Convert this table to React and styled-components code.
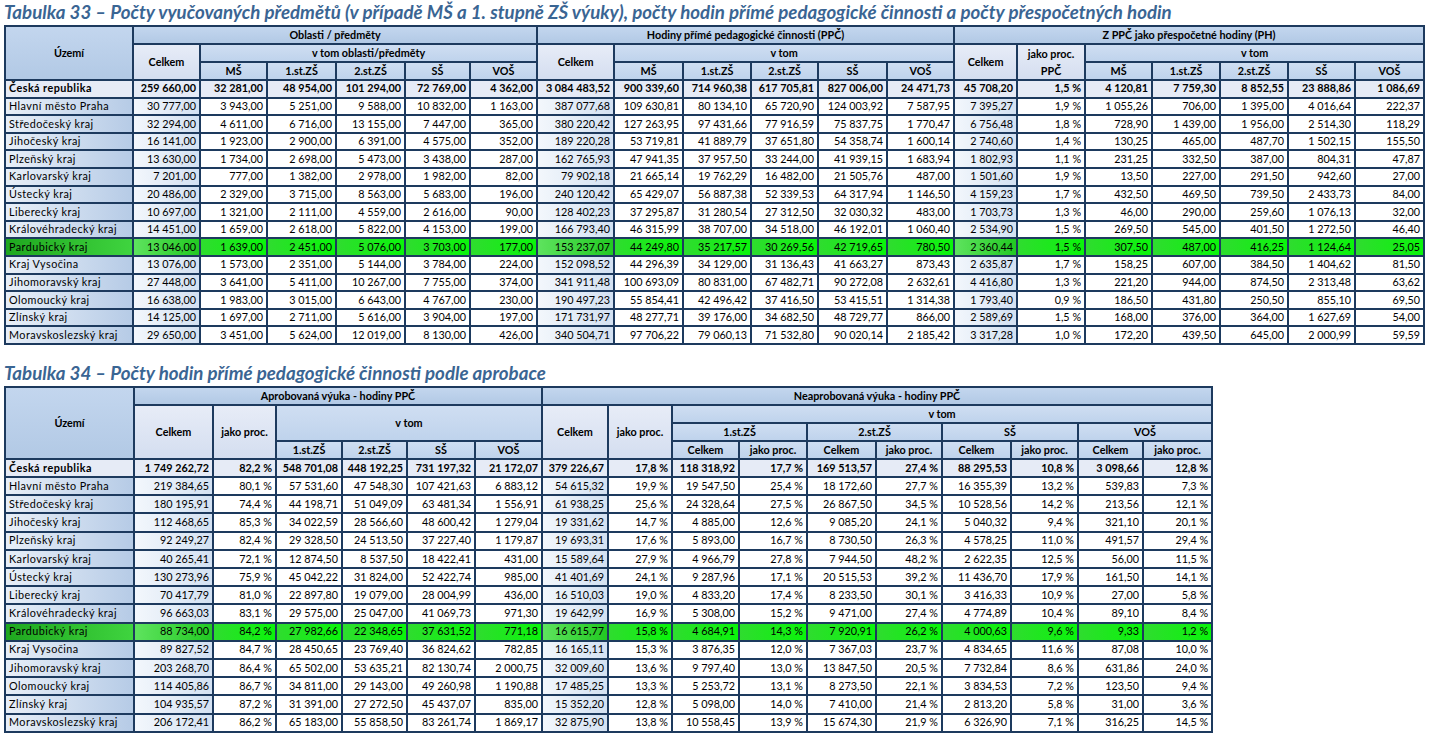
import React from "react";
import styled, { createGlobalStyle, css } from "styled-components";

const Global = createGlobalStyle`
  html, body { margin: 0; padding: 0; background: #ffffff; }
  body { font-family: Lato, "Noto Sans", sans-serif; color: #000; }
`;

const Page = styled.div`
  display: flex;
  flex-direction: column;
  padding: 2px 4px 0 4px;
`;

const Section = styled.section`
  display: flex;
  flex-direction: column;
  margin-bottom: ${(p) => p.$gap || 0}px;
`;

const Title = styled.h2`
  margin: 0 0 ${(p) => p.$below || 4}px 0;
  font-family: Lato, "Noto Sans", sans-serif;
  font-style: italic;
  font-weight: 700;
  font-size: 18.7px;
  line-height: 21px;
  color: #3a6593;
  white-space: nowrap;
`;

const Table = styled.table`
  border-collapse: collapse;
  table-layout: fixed;
  width: ${(p) => p.$width}px;
  border: 2px solid #1d3a5e;
  font-size: 10.8px;
  line-height: 1;
`;

const BORDER = "#1d3a5e";

const headBg = {
  dark: "linear-gradient(to bottom, #c3d6ee, #b2c9e5)",
  mid: "linear-gradient(to bottom, #cfdef2, #bfd3ec)",
  light: "linear-gradient(to bottom, #e7ecf7, #d4def0)",
};

const Th = styled.th`
  border: 2px solid ${BORDER};
  background: ${(p) => headBg[p.$tone || "mid"]};
  font-weight: 700;
  text-align: center;
  vertical-align: middle;
  height: ${(p) => p.$h}px;
  padding: 0 2px;
  white-space: ${(p) => (p.$wrap ? "normal" : "nowrap")};
  line-height: ${(p) => (p.$wrap ? "17px" : "1")};
  overflow: hidden;
  color: #000;
`;

const cellBg = ({ $kind, $green, $total }) => {
  if ($green) {
    if ($kind === "name") return "linear-gradient(to right, #1fa71f, #3fd43f)";
    if ($kind === "celkem") return "linear-gradient(to right, #5ee35e, #22c922)";
    return "linear-gradient(to right, #2fdc2f, #0af50a)";
  }
  if ($total) return "#e6ebf6";
  if ($kind === "name") return "linear-gradient(to right, #e8eff8, #b6cbe6)";
  if ($kind === "celkem") return "linear-gradient(to right, #f3f7fc, #d3e1f2)";
  return "#ffffff";
};

const Td = styled.td`
  border: 2px solid ${BORDER};
  height: ${(p) => p.$h}px;
  padding: 0 3px 0 3px;
  white-space: nowrap;
  overflow: hidden;
  text-align: ${(p) => (p.$kind === "name" ? "left" : "right")};
  font-weight: ${(p) => (p.$total ? 700 : 400)};
  background: ${cellBg};
  ${(p) =>
    p.$kind === "name" &&
    css`
      letter-spacing: 0.45px;
    `}
`;

const t33Cols = [128, 67, 67, 69, 69, 65, 67, 77, 69, 68, 67, 69, 67, 63, 68, 67, 68, 68, 67, 69];
const t34Cols = [129, 79, 63, 66, 65, 68, 67, 66, 64, 67, 68, 69, 66, 69, 67, 65, 69];

const t33Celkem = new Set([1, 7, 13]);
const t34Celkem = new Set([1, 7]);

const t33Rows = [
  ["Česká republika", "259 660,00", "32 281,00", "48 954,00", "101 294,00", "72 769,00", "4 362,00", "3 084 483,52", "900 339,60", "714 960,38", "617 705,81", "827 006,00", "24 471,73", "45 708,20", "1,5 %", "4 120,81", "7 759,30", "8 852,55", "23 888,86", "1 086,69"],
  ["Hlavní město Praha", "30 777,00", "3 943,00", "5 251,00", "9 588,00", "10 832,00", "1 163,00", "387 077,68", "109 630,81", "80 134,10", "65 720,90", "124 003,92", "7 587,95", "7 395,27", "1,9 %", "1 055,26", "706,00", "1 395,00", "4 016,64", "222,37"],
  ["Středočeský kraj", "32 294,00", "4 611,00", "6 716,00", "13 155,00", "7 447,00", "365,00", "380 220,42", "127 263,95", "97 431,66", "77 916,59", "75 837,75", "1 770,47", "6 756,48", "1,8 %", "728,90", "1 439,00", "1 956,00", "2 514,30", "118,29"],
  ["Jihočeský kraj", "16 141,00", "1 923,00", "2 900,00", "6 391,00", "4 575,00", "352,00", "189 220,28", "53 719,81", "41 889,79", "37 651,80", "54 358,74", "1 600,14", "2 740,60", "1,4 %", "130,25", "465,00", "487,70", "1 502,15", "155,50"],
  ["Plzeňský kraj", "13 630,00", "1 734,00", "2 698,00", "5 473,00", "3 438,00", "287,00", "162 765,93", "47 941,35", "37 957,50", "33 244,00", "41 939,15", "1 683,94", "1 802,93", "1,1 %", "231,25", "332,50", "387,00", "804,31", "47,87"],
  ["Karlovarský kraj", "7 201,00", "777,00", "1 382,00", "2 978,00", "1 982,00", "82,00", "79 902,18", "21 665,14", "19 762,29", "16 482,00", "21 505,76", "487,00", "1 501,60", "1,9 %", "13,50", "227,00", "291,50", "942,60", "27,00"],
  ["Ústecký kraj", "20 486,00", "2 329,00", "3 715,00", "8 563,00", "5 683,00", "196,00", "240 120,42", "65 429,07", "56 887,38", "52 339,53", "64 317,94", "1 146,50", "4 159,23", "1,7 %", "432,50", "469,50", "739,50", "2 433,73", "84,00"],
  ["Liberecký kraj", "10 697,00", "1 321,00", "2 111,00", "4 559,00", "2 616,00", "90,00", "128 402,23", "37 295,87", "31 280,54", "27 312,50", "32 030,32", "483,00", "1 703,73", "1,3 %", "46,00", "290,00", "259,60", "1 076,13", "32,00"],
  ["Královéhradecký kraj", "14 451,00", "1 659,00", "2 618,00", "5 822,00", "4 153,00", "199,00", "166 793,40", "46 315,99", "38 707,00", "34 518,00", "46 192,01", "1 060,40", "2 534,90", "1,5 %", "269,50", "545,00", "401,50", "1 272,50", "46,40"],
  ["Pardubický kraj", "13 046,00", "1 639,00", "2 451,00", "5 076,00", "3 703,00", "177,00", "153 237,07", "44 249,80", "35 217,57", "30 269,56", "42 719,65", "780,50", "2 360,44", "1,5 %", "307,50", "487,00", "416,25", "1 124,64", "25,05"],
  ["Kraj Vysočina", "13 076,00", "1 573,00", "2 351,00", "5 144,00", "3 784,00", "224,00", "152 098,52", "44 296,39", "34 129,00", "31 136,43", "41 663,27", "873,43", "2 635,87", "1,7 %", "158,25", "607,00", "384,50", "1 404,62", "81,50"],
  ["Jihomoravský kraj", "27 448,00", "3 641,00", "5 411,00", "10 267,00", "7 755,00", "374,00", "341 911,48", "100 693,09", "80 831,00", "67 482,71", "90 272,08", "2 632,61", "4 416,80", "1,3 %", "221,20", "944,00", "874,50", "2 313,48", "63,62"],
  ["Olomoucký kraj", "16 638,00", "1 983,00", "3 015,00", "6 643,00", "4 767,00", "230,00", "190 497,23", "55 854,41", "42 496,42", "37 416,50", "53 415,51", "1 314,38", "1 793,40", "0,9 %", "186,50", "431,80", "250,50", "855,10", "69,50"],
  ["Zlínský kraj", "14 125,00", "1 697,00", "2 711,00", "5 616,00", "3 904,00", "197,00", "171 731,97", "48 277,71", "39 176,00", "34 682,50", "48 729,77", "866,00", "2 589,69", "1,5 %", "168,00", "376,00", "364,00", "1 627,69", "54,00"],
  ["Moravskoslezský kraj", "29 650,00", "3 451,00", "5 624,00", "12 019,00", "8 130,00", "426,00", "340 504,71", "97 706,22", "79 060,13", "71 532,80", "90 020,14", "2 185,42", "3 317,28", "1,0 %", "172,20", "439,50", "645,00", "2 000,99", "59,59"],
];

const t34Rows = [
  ["Česká republika", "1 749 262,72", "82,2 %", "548 701,08", "448 192,25", "731 197,32", "21 172,07", "379 226,67", "17,8 %", "118 318,92", "17,7 %", "169 513,57", "27,4 %", "88 295,53", "10,8 %", "3 098,66", "12,8 %"],
  ["Hlavní město Praha", "219 384,65", "80,1 %", "57 531,60", "47 548,30", "107 421,63", "6 883,12", "54 615,32", "19,9 %", "19 547,50", "25,4 %", "18 172,60", "27,7 %", "16 355,39", "13,2 %", "539,83", "7,3 %"],
  ["Středočeský kraj", "180 195,91", "74,4 %", "44 198,71", "51 049,09", "63 481,34", "1 556,91", "61 938,25", "25,6 %", "24 328,64", "27,5 %", "26 867,50", "34,5 %", "10 528,56", "14,2 %", "213,56", "12,1 %"],
  ["Jihočeský kraj", "112 468,65", "85,3 %", "34 022,59", "28 566,60", "48 600,42", "1 279,04", "19 331,62", "14,7 %", "4 885,00", "12,6 %", "9 085,20", "24,1 %", "5 040,32", "9,4 %", "321,10", "20,1 %"],
  ["Plzeňský kraj", "92 249,27", "82,4 %", "29 328,50", "24 513,50", "37 227,40", "1 179,87", "19 693,31", "17,6 %", "5 893,00", "16,7 %", "8 730,50", "26,3 %", "4 578,25", "11,0 %", "491,57", "29,4 %"],
  ["Karlovarský kraj", "40 265,41", "72,1 %", "12 874,50", "8 537,50", "18 422,41", "431,00", "15 589,64", "27,9 %", "4 966,79", "27,8 %", "7 944,50", "48,2 %", "2 622,35", "12,5 %", "56,00", "11,5 %"],
  ["Ústecký kraj", "130 273,96", "75,9 %", "45 042,22", "31 824,00", "52 422,74", "985,00", "41 401,69", "24,1 %", "9 287,96", "17,1 %", "20 515,53", "39,2 %", "11 436,70", "17,9 %", "161,50", "14,1 %"],
  ["Liberecký kraj", "70 417,79", "81,0 %", "22 897,80", "19 079,00", "28 004,99", "436,00", "16 510,03", "19,0 %", "4 833,20", "17,4 %", "8 233,50", "30,1 %", "3 416,33", "10,9 %", "27,00", "5,8 %"],
  ["Královéhradecký kraj", "96 663,03", "83,1 %", "29 575,00", "25 047,00", "41 069,73", "971,30", "19 642,99", "16,9 %", "5 308,00", "15,2 %", "9 471,00", "27,4 %", "4 774,89", "10,4 %", "89,10", "8,4 %"],
  ["Pardubický kraj", "88 734,00", "84,2 %", "27 982,66", "22 348,65", "37 631,52", "771,18", "16 615,77", "15,8 %", "4 684,91", "14,3 %", "7 920,91", "26,2 %", "4 000,63", "9,6 %", "9,33", "1,2 %"],
  ["Kraj Vysočina", "89 827,52", "84,7 %", "28 450,65", "23 769,40", "36 824,62", "782,85", "16 165,11", "15,3 %", "3 876,35", "12,0 %", "7 367,03", "23,7 %", "4 834,65", "11,6 %", "87,08", "10,0 %"],
  ["Jihomoravský kraj", "203 268,70", "86,4 %", "65 502,00", "53 635,21", "82 130,74", "2 000,75", "32 009,60", "13,6 %", "9 797,40", "13,0 %", "13 847,50", "20,5 %", "7 732,84", "8,6 %", "631,86", "24,0 %"],
  ["Olomoucký kraj", "114 405,86", "86,7 %", "34 811,00", "29 143,00", "49 260,98", "1 190,88", "17 485,25", "13,3 %", "5 253,72", "13,1 %", "8 273,50", "22,1 %", "3 834,53", "7,2 %", "123,50", "9,4 %"],
  ["Zlínský kraj", "104 935,57", "87,2 %", "31 391,00", "27 272,50", "45 437,07", "835,00", "15 352,20", "12,8 %", "5 098,00", "14,0 %", "7 410,00", "21,4 %", "2 813,20", "5,8 %", "31,00", "3,6 %"],
  ["Moravskoslezský kraj", "206 172,41", "86,2 %", "65 183,00", "55 858,50", "83 261,74", "1 869,17", "32 875,90", "13,8 %", "10 558,45", "13,9 %", "15 674,30", "21,9 %", "6 326,90", "7,1 %", "316,25", "14,5 %"],
];

const sum = (a) => a.reduce((s, v) => s + v, 0);

function DataRows({ rows, celkemCols, h }) {
  return rows.map((row, ri) => {
    const total = ri === 0;
    const green = row[0] === "Pardubický kraj";
    return (
      <tr key={row[0]}>
        {row.map((v, ci) => (
          <Td
            key={ci}
            $h={h}
            $total={total}
            $green={green}
            $kind={ci === 0 ? "name" : celkemCols.has(ci) ? "celkem" : "plain"}
          >
            {v}
          </Td>
        ))}
      </tr>
    );
  });
}

function Table33() {
  const H = 16;
  const sub = ["MŠ", "1.st.ZŠ", "2.st.ZŠ", "SŠ", "VOŠ"];
  return (
    <Table $width={sum(t33Cols)}>
      <colgroup>
        {t33Cols.map((w, i) => (
          <col key={i} style={{ width: w }} />
        ))}
      </colgroup>
      <thead>
        <tr>
          <Th rowSpan={3} $tone="dark" $h={H}>Území</Th>
          <Th colSpan={6} $tone="dark" $h={H}>Oblasti / předměty</Th>
          <Th colSpan={6} $tone="dark" $h={H}>Hodiny přímé pedagogické činnosti (PPČ)</Th>
          <Th colSpan={7} $tone="dark" $h={H}>Z PPČ jako přespočetné hodiny (PH)</Th>
        </tr>
        <tr>
          <Th rowSpan={2} $tone="light" $h={H}>Celkem</Th>
          <Th colSpan={5} $tone="mid" $h={H}>v tom oblasti/předměty</Th>
          <Th rowSpan={2} $tone="light" $h={H}>Celkem</Th>
          <Th colSpan={5} $tone="mid" $h={H}>v tom</Th>
          <Th rowSpan={2} $tone="light" $h={H}>Celkem</Th>
          <Th rowSpan={2} $tone="light" $h={H} $wrap>jako proc. PPČ</Th>
          <Th colSpan={5} $tone="mid" $h={H}>v tom</Th>
        </tr>
        <tr>
          {[...sub, ...sub, ...sub].map((s, i) => (
            <Th key={i} $tone="mid" $h={H}>{s}</Th>
          ))}
        </tr>
      </thead>
      <tbody>
        <DataRows rows={t33Rows} celkemCols={t33Celkem} h={15.6} />
      </tbody>
    </Table>
  );
}

function Table34() {
  const H = 16;
  const groups = ["1.st.ZŠ", "2.st.ZŠ", "SŠ", "VOŠ"];
  return (
    <Table $width={sum(t34Cols)}>
      <colgroup>
        {t34Cols.map((w, i) => (
          <col key={i} style={{ width: w }} />
        ))}
      </colgroup>
      <thead>
        <tr>
          <Th rowSpan={4} $tone="dark" $h={H}>Území</Th>
          <Th colSpan={6} $tone="dark" $h={H}>Aprobovaná výuka - hodiny PPČ</Th>
          <Th colSpan={10} $tone="dark" $h={H}>Neaprobovaná výuka - hodiny PPČ</Th>
        </tr>
        <tr>
          <Th rowSpan={3} $tone="light" $h={H}>Celkem</Th>
          <Th rowSpan={3} $tone="light" $h={H}>jako proc.</Th>
          <Th colSpan={4} rowSpan={2} $tone="mid" $h={H}>v tom</Th>
          <Th rowSpan={3} $tone="light" $h={H}>Celkem</Th>
          <Th rowSpan={3} $tone="light" $h={H}>jako proc.</Th>
          <Th colSpan={8} $tone="mid" $h={H}>v tom</Th>
        </tr>
        <tr>
          {groups.map((g) => (
            <Th key={g} colSpan={2} $tone="mid" $h={H}>{g}</Th>
          ))}
        </tr>
        <tr>
          {groups.map((g) => (
            <Th key={g} $tone="mid" $h={H}>{g}</Th>
          ))}
          {groups.map((g) => (
            <React.Fragment key={g}>
              <Th $tone="mid" $h={H}>Celkem</Th>
              <Th $tone="mid" $h={H}>jako proc.</Th>
            </React.Fragment>
          ))}
        </tr>
      </thead>
      <tbody>
        <DataRows rows={t34Rows} celkemCols={t34Celkem} h={16.2} />
      </tbody>
    </Table>
  );
}

export default function App() {
  return (
    <Page>
      <Global />
      <Section $gap={18}>
        <Title $below={2}>
          Tabulka 33 – Počty vyučovaných předmětů (v případě MŠ a 1. stupně ZŠ výuky), počty hodin přímé pedagogické činnosti a počty přespočetných hodin
        </Title>
        <Table33 />
      </Section>
      <Section>
        <Title $below={2}>Tabulka 34 – Počty hodin přímé pedagogické činnosti podle aprobace</Title>
        <Table34 />
      </Section>
    </Page>
  );
}
